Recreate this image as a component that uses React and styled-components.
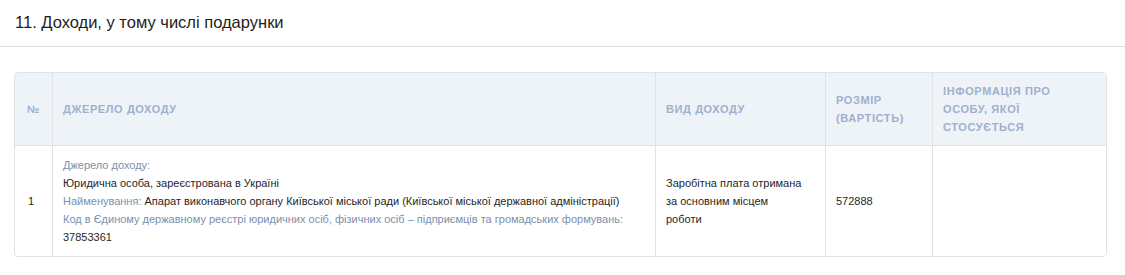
import React from "react";
import styled, { createGlobalStyle } from "styled-components";

const Global = createGlobalStyle`
  html, body { margin: 0; padding: 0; background: #fff; }
  body { font-family: Arial, "Liberation Sans", sans-serif; color: #222; }
`;

const Page = styled.div`
  width: 1125px;
`;

const Title = styled.h2`
  margin: 0;
  padding: 12px 15px 0;
  height: 47px;
  box-sizing: border-box;
  font-size: 16.5px;
  font-weight: normal;
  line-height: 20px;
  color: #1d1d1d;
  border-bottom: 1px solid #dcdcdc;
`;

const Wrap = styled.div`
  padding: 25px 20px 0 14px;
`;

const Table = styled.table`
  width: 1092px;
  border-collapse: separate;
  border-spacing: 0;
  border: 1px solid #dfe3e8;
  border-radius: 4px;
  table-layout: fixed;
  overflow: hidden;
`;

const Th = styled.th`
  background: #eef3f8;
  color: #9fb0cd;
  font-size: 11px;
  font-weight: bold;
  text-transform: uppercase;
  letter-spacing: 0.6px;
  line-height: 18px;
  text-align: ${(p) => (p.$center ? "center" : "left")};
  padding: 9px 10px;
  height: 54px;
  vertical-align: middle;
  border-left: ${(p) => (p.$first ? "none" : "1px solid #dfe3e8")};
  border-bottom: 1px solid #dfe3e8;
`;

const Td = styled.td`
  font-size: 11px;
  line-height: 18px;
  color: #1f1f1f;
  padding: ${(p) => (p.$first ? "10px 4px 10px 13px" : "10px 20px 10px 10px")};
  text-align: left;
  vertical-align: middle;
  border-left: ${(p) => (p.$first ? "none" : "1px solid #dfe3e8")};
`;

const Label = styled.span`
  color: #7b8fab;
`;

const Line = styled.div``;

export default function App() {
  return (
    <Page>
      <Global />
      <Title>11. Доходи, у тому числі подарунки</Title>
      <Wrap>
        <Table>
          <colgroup>
            <col style={{ width: 37 }} />
            <col style={{ width: 603 }} />
            <col style={{ width: 170 }} />
            <col style={{ width: 107 }} />
            <col style={{ width: 174 }} />
          </colgroup>
          <thead>
            <tr>
              <Th $first $center>№</Th>
              <Th>Джерело доходу</Th>
              <Th>Вид доходу</Th>
              <Th>Розмір (вартість)</Th>
              <Th>Інформація про особу, якої стосується</Th>
            </tr>
          </thead>
          <tbody>
            <tr>
              <Td $first>1</Td>
              <Td>
                <Line><Label>Джерело доходу:</Label></Line>
                <Line>Юридична особа, зареєстрована в Україні</Line>
                <Line>
                  <Label>Найменування:</Label> Апарат виконавчого органу Київської міської ради (Київської міської державної адміністрації)
                </Line>
                <Line>
                  <Label>Код в Єдиному державному реєстрі юридичних осіб, фізичних осіб – підприємців та громадських формувань:</Label>
                </Line>
                <Line>37853361</Line>
              </Td>
              <Td>Заробітна плата отримана за основним місцем роботи</Td>
              <Td>572888</Td>
              <Td></Td>
            </tr>
          </tbody>
        </Table>
      </Wrap>
    </Page>
  );
}
